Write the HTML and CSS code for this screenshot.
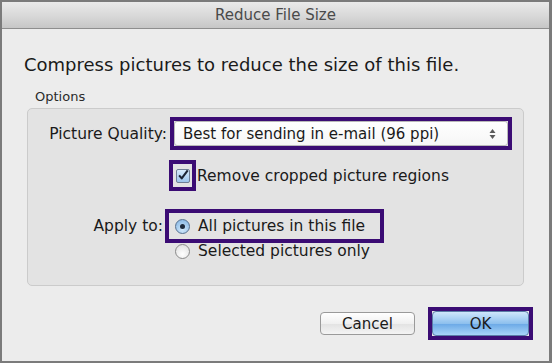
FILE: index.html
```html
<!DOCTYPE html>
<html lang="en">
<head>
  <meta charset="UTF-8" />
  <title>Reduce File Size</title>
  <link rel="stylesheet" href="styles.css">
</head>
<body>
  <div class="window">
    <div class="titlebar">Reduce File Size</div>

    <div class="content">
      <p class="intro">Compress pictures to reduce the size of this file.</p>

      <div class="legend">Options</div>
      <div class="group">
        <div class="row row-quality">
          <span class="label">Picture Quality:</span>
          <div class="frame frame-select">
            <div class="select">
              <span>Best for sending in e-mail (96 ppi)</span>
              <svg class="arrows" width="7" height="12" viewBox="0 0 7 12">
                <path d="M3.5 1 L6.5 5 L0.5 5 Z" fill="#5a5a5a" />
                <path d="M3.5 11 L6.5 7 L0.5 7 Z" fill="#5a5a5a" />
              </svg>
            </div>
          </div>
        </div>

        <div class="row row-crop">
          <span class="label"></span>
          <span class="frame check-wrap">
            <span class="checkbox">
              <svg width="14" height="14" viewBox="0 0 14 14">
                <path d="M2.5 7.5 L5.5 11 L12.5 1.5" fill="none" stroke="#1b2433" stroke-width="2.4" stroke-linejoin="round" />
              </svg>
            </span>
          </span>
          <span class="check-text">Remove cropped picture regions</span>
        </div>

        <div class="row row-apply">
          <span class="label">Apply to:</span>
          <div class="radios">
            <label class="option frame"><span class="radio on"></span>All pictures in this file</label>
            <label class="option"><span class="radio"></span>Selected pictures only</label>
          </div>
        </div>
      </div>

      <div class="buttons">
        <button class="btn">Cancel</button>
        <div class="frame">
          <button class="btn btn-ok">OK</button>
        </div>
      </div>
    </div>
  </div>
</body>
</html>
```

FILE: styles.css
```css
* {
  box-sizing: border-box;
}
body {
  margin: 0;
  background: #7b7b7b;
  font-family: "DejaVu Sans", "Lucida Grande", sans-serif;
  color: #1a1a1a;
}
.window {
  width: 552px;
  height: 363px;
  border: 2px solid #7b7b7b;
  border-right-width: 3px;
  background: #ececec;
  overflow: hidden;
}
.titlebar {
  height: 27px;
  background: linear-gradient(#eaeaea, #d6d6d6 60%, #c6c6c6);
  border-bottom: 1px solid #8e8e8e;
  text-align: center;
  font-size: 15px;
  line-height: 26px;
  color: #4a4a4a;
}
.content {
  padding: 0 25px;
}
.intro {
  margin: 25px 0 0 -3px;
  font-size: 18px;
  line-height: 22px;
}
.legend {
  margin: 13px 0 0 8px;
  font-size: 13px;
  line-height: 16px;
  color: #2a2a2a;
}
.group {
  margin-top: 3px;
  height: 178px;
  background: #e3e3e3;
  border: 1px solid #cbcbcb;
  border-radius: 5px;
  padding-top: 12px;
}
.row {
  display: flex;
  align-items: center;
  font-size: 15.5px;
}
.label {
  width: 139px;
  text-align: right;
  flex: none;
}

/* purple annotation frames */
.frame {
  outline: 4px solid #3b0c74;
}
.frame-select {
  margin-left: 7px;
}

.select {
  width: 334px;
  height: 25px;
  background: linear-gradient(#ffffff, #f6f6f6);
  border: 1px solid #b9b9b9;
  border-radius: 3px;
  display: flex;
  align-items: center;
  justify-content: space-between;
  padding: 0 11px 0 8px;
  font-size: 15px;
}
.arrows {
  display: block;
}

.row-crop {
  margin-top: 18px;
  height: 23px;
}
.check-wrap {
  margin-left: 6px;
  width: 19px;
  height: 23px;
  display: flex;
  align-items: center;
  justify-content: center;
}
.checkbox {
  width: 14px;
  height: 14px;
  border: 1px solid #6f7f95;
  border-radius: 2px;
  background: linear-gradient(#d8ecfb, #9cc5ec);
  display: flex;
  align-items: center;
  justify-content: center;
}
.checkbox svg {
  display: block;
  margin-top: -2px;
}
.check-text {
  margin-left: 5px;
}

.row-apply {
  margin-top: 26px;
  align-items: flex-start;
}
.row-apply .label {
  width: 135px;
  line-height: 26px;
}
.radios {
  margin-left: 6px;
  display: flex;
  flex-direction: column;
}
.option {
  display: flex;
  align-items: center;
  height: 26px;
  width: 211px;
  padding-left: 6px;
  gap: 8px;
}
.option + .option {
  height: 24px;
}
.radio {
  width: 15px;
  height: 15px;
  border-radius: 50%;
  border: 1px solid #8a8a8a;
  background: radial-gradient(circle at 50% 70%, #ffffff, #dcdcdc);
  flex: none;
  display: flex;
  align-items: center;
  justify-content: center;
}
.radio.on {
  border-color: #56708f;
  background: radial-gradient(circle at 50% 75%, #cfe7fa, #7fb2e2);
}
.radio.on::after {
  content: "";
  width: 5px;
  height: 5px;
  border-radius: 50%;
  background: #1c2a3c;
}

.buttons {
  display: flex;
  justify-content: flex-end;
  align-items: center;
  gap: 17px;
  margin-top: 25px;
  margin-right: -5px;
}
.buttons .frame {
  display: flex;
}
.btn {
  font-family: inherit;
  font-size: 15px;
  color: #1a1a1a;
  height: 23px;
  width: 95px;
  border: 1px solid #9a9a9a;
  border-radius: 4px;
  background: linear-gradient(#ffffff, #f0f0f0 50%, #e2e2e2 51%, #f4f4f4);
  padding: 0;
}
.btn-ok {
  width: 97px;
  height: 25px;
  border-color: #5a7ca6;
  border-radius: 4px;
  background: linear-gradient(#cfe6fb, #8ec0ee 50%, #6aa8e6 51%, #a8d4f8);
}
```
